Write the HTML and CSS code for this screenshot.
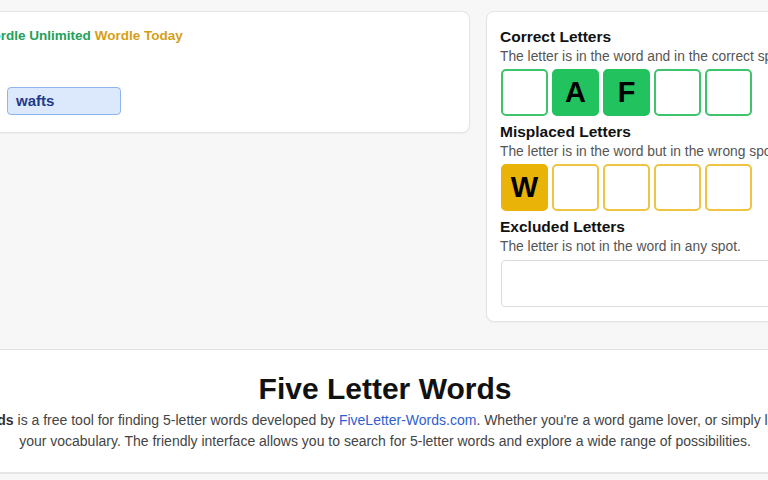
FILE: index.html
```html
<!DOCTYPE html>
<html lang="en">
<head>
  <meta charset="UTF-8" />
  <meta name="viewport" content="width=device-width, initial-scale=1.0"/>
  <title>Five Letter Words</title>
  <link rel="stylesheet" href="styles.css">
</head>
<body>
  <div class="page">
    <div class="top">
      <div class="card search-card">
        <div class="game-links">
          <a class="link-green" href="#">Wordle Unlimited</a>
          <a class="link-gold" href="#">Wordle Today</a>
        </div>
        <div class="guess-row">
          <div class="guess">wafts</div>
        </div>
      </div>

      <div class="card letters-card">
        <div class="letter-group">
          <h3>Correct Letters</h3>
          <p>The letter is in the word and in the correct spot.</p>
          <div class="tiles">
            <div class="tile correct"></div>
            <div class="tile correct filled">A</div>
            <div class="tile correct filled">F</div>
            <div class="tile correct"></div>
            <div class="tile correct"></div>
          </div>
        </div>
        <div class="letter-group">
          <h3>Misplaced Letters</h3>
          <p>The letter is in the word but in the wrong spot.</p>
          <div class="tiles">
            <div class="tile misplaced filled">W</div>
            <div class="tile misplaced"></div>
            <div class="tile misplaced"></div>
            <div class="tile misplaced"></div>
            <div class="tile misplaced"></div>
          </div>
        </div>
        <div class="letter-group">
          <h3>Excluded Letters</h3>
          <p>The letter is not in the word in any spot.</p>
          <div class="excluded"></div>
        </div>
      </div>
    </div>

    <section class="intro">
      <h1>Five Letter Words</h1>
      <p><strong>Five Letter Words</strong> is a free tool for finding 5-letter words developed by <a href="#">FiveLetter-Words.com</a>. Whether you're a word game lover, or simply looking to expand your vocabulary. The friendly interface allows you to search for 5-letter words and explore a wide range of possibilities.</p>
    </section>
  </div>
</body>
</html>
```

FILE: styles.css
```css
body { margin: 0; background: #f7f7f7; color: #111; font-family: "Liberation Sans", Arial, Helvetica, sans-serif; overflow: hidden; }
.page { width: 1000px; margin-left: -115px; }

.top { display: grid; grid-template-columns: 1fr 399px; gap: 16px; align-items: start; padding-top: 11px; }
.card { background: #fff; border: 1px solid #e4e4e4; border-radius: 8px; box-shadow: 0 1px 2px rgba(0,0,0,0.04); }

.search-card { padding: 15px 20px 17px 94px; }
.game-links { display: flex; gap: 4px; font-size: 13.5px; line-height: 18px; font-weight: bold; }
.game-links a { text-decoration: none; }
.link-green { color: #23a15a; }
.link-gold { color: #d4a017; }
.guess-row { margin-top: 42px; padding-left: 27px; }
.guess { width: 104px; height: 26px; padding-left: 8px; line-height: 26px; background: #dce9fc; border: 1px solid #8fb6ea; border-radius: 4px; color: #1e3a8a; font-size: 15px; font-weight: bold; }

.letters-card { padding: 15px 14px 14px 13px; }
.letter-group + .letter-group { margin-top: 6px; }
.letter-group h3 { margin: 0; font-size: 15.5px; line-height: 20px; color: #111; }
.letter-group p { margin: 0; font-size: 13.8px; line-height: 20px; color: #555; white-space: nowrap; }
.tiles { display: flex; gap: 4px; margin-top: 2px; padding-left: 1px; }
.tile { width: 43px; height: 43px; border: 2px solid; border-radius: 5px; display: flex; align-items: center; justify-content: center; font-size: 29px; font-weight: bold; color: #000; background: #fff; }
.tile.correct { border-color: #3ec46d; }
.tile.correct.filled { background: #22c35e; border-color: #22c35e; }
.tile.misplaced { border-color: #efc443; }
.tile.misplaced.filled { background: #eab308; border-color: #eab308; }
.excluded { height: 45px; margin-top: 3px; margin-left: 1px; border: 1px solid #dcdcdc; border-radius: 4px; }

.intro { margin-top: 27px; background: #fff; border-top: 1px solid #e2e2e2; border-bottom: 2px solid #e6e6e6; padding: 21px 0 20px; text-align: center; }
.intro h1 { margin: 0; font-size: 30px; line-height: 36px; color: #111; }
.intro p { margin: 3px auto 0; max-width: 990px; font-size: 14px; line-height: 21px; color: #444; }
.intro p strong { color: #333; }
.intro p a { color: #2f5fd0; text-decoration: none; }
```
